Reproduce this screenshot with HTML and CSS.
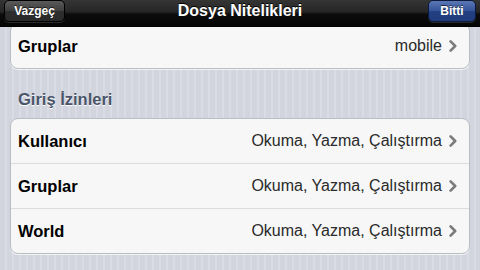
FILE: index.html
```html
<!DOCTYPE html>
<html lang="tr">
<head>
<meta charset="utf-8">
<link rel="stylesheet" href="styles.css">
</head>
<body>
<header class="navbar">
  <div class="nav-left"><button class="btn btn-dark">Vazgeç</button></div>
  <div class="nav-title">Dosya Nitelikleri</div>
  <div class="nav-right"><button class="btn btn-blue">Bitti</button></div>
</header>
<main class="content">
  <section class="group">
    <div class="row">
      <span class="label">Gruplar</span>
      <span class="value">mobile</span>
      <svg class="chev" viewBox="0 0 8 12" width="8" height="12"><path d="M1.6 1.4 L6.2 6 L1.6 10.6" fill="none" stroke="#7b7b7b" stroke-width="2.6" stroke-linecap="round" stroke-linejoin="round"/></svg>
    </div>
  </section>
  <h2 class="section-title">Giriş İzinleri</h2>
  <section class="group">
    <div class="row">
      <span class="label">Kullanıcı</span>
      <span class="value">Okuma, Yazma, Çalıştırma</span>
      <svg class="chev" viewBox="0 0 8 12" width="8" height="12"><path d="M1.6 1.4 L6.2 6 L1.6 10.6" fill="none" stroke="#7b7b7b" stroke-width="2.6" stroke-linecap="round" stroke-linejoin="round"/></svg>
    </div>
    <div class="row">
      <span class="label">Gruplar</span>
      <span class="value">Okuma, Yazma, Çalıştırma</span>
      <svg class="chev" viewBox="0 0 8 12" width="8" height="12"><path d="M1.6 1.4 L6.2 6 L1.6 10.6" fill="none" stroke="#7b7b7b" stroke-width="2.6" stroke-linecap="round" stroke-linejoin="round"/></svg>
    </div>
    <div class="row">
      <span class="label">World</span>
      <span class="value">Okuma, Yazma, Çalıştırma</span>
      <svg class="chev" viewBox="0 0 8 12" width="8" height="12"><path d="M1.6 1.4 L6.2 6 L1.6 10.6" fill="none" stroke="#7b7b7b" stroke-width="2.6" stroke-linecap="round" stroke-linejoin="round"/></svg>
    </div>
  </section>
</main>
</body>
</html>
```
FILE: styles.css
```css
html, body {
  margin: 0;
  padding: 0;
  width: 480px;
  height: 270px;
  overflow: hidden;
}
body {
  font-family: "Liberation Sans", Arial, sans-serif;
  background-color: #d5d8e0;
  background-image: repeating-linear-gradient(90deg, #d2d5de 0px, #d2d5de 5px, #d9dce4 5px, #d9dce4 7px);
}
.navbar {
  position: relative;
  z-index: 2;
  height: 27px;
  display: grid;
  grid-template-columns: 1fr auto 1fr;
  align-items: start;
  padding: 0 4px 0 4px;
  box-sizing: border-box;
  background: linear-gradient(#353535 0%, #262626 45%, #0c0c0c 55%, #050505 100%);
  border-bottom: 1px solid #000;
}
.nav-left { display: flex; justify-content: flex-start; }
.nav-right { display: flex; justify-content: flex-end; }
.nav-title {
  color: #fff;
  font-weight: bold;
  font-size: 16px;
  line-height: 22px;
  text-shadow: 0 -1px 0 #000;
}
.btn {
  font-family: "Liberation Sans", Arial, sans-serif;
  font-weight: bold;
  font-size: 12px;
  color: #fff;
  height: 22px;
  margin-top: 0;
  border-radius: 5px;
  border: 1px solid #000;
  text-shadow: 0 -1px 0 rgba(0,0,0,0.6);
  line-height: 20px;
  box-sizing: border-box;
  box-shadow: 0 1px 0 rgba(255,255,255,0.15);
}
.btn-dark {
  width: 61px;
  padding: 0;
  background: linear-gradient(#5a5a5a 0%, #3e3e3e 50%, #2d2d2d 52%, #2a2a2a 100%);
}
.btn-blue {
  width: 48px;
  padding: 0;
  background: linear-gradient(#5a76b4 0%, #34549a 50%, #233f82 52%, #213c7c 100%);
  border-color: #0b1a3c;
}
.content {
  position: relative;
  z-index: 1;
  margin-top: -4px;
  padding: 0 10px;
}
.group {
  background: #f7f7f7;
  border: 1px solid #b9bcc2;
  border-radius: 8px;
  box-shadow: 0 1px 0 rgba(255,255,255,0.7);
}
.row {
  height: 44px;
  display: flex;
  align-items: center;
  padding: 0 12px 0 7px;
  border-top: 1px solid #dcdcdc;
}
.row:first-child { border-top: none; }
.label {
  flex: 1;
  font-weight: bold;
  font-size: 16.5px;
  color: #000;
}
.value {
  font-size: 16px;
  color: #2a2a2a;
  margin-right: 7px;
}
.chev { display: block; }
.section-title {
  margin: 0;
  padding: 20px 0 9px 8px;
  font-size: 16.5px;
  line-height: 20px;
  font-weight: bold;
  color: #4a5469;
  text-shadow: 0 1px 0 #fff;
}
```
